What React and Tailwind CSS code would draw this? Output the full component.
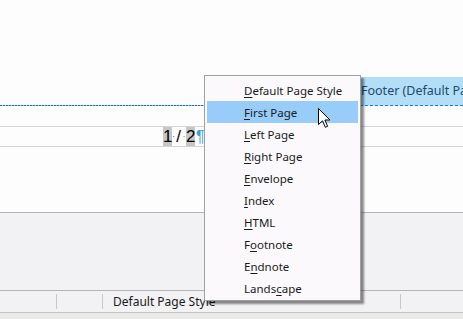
import React from "react";

const items = [
  ["", "D", "efault Page Style"],
  ["", "F", "irst Page"],
  ["", "L", "eft Page"],
  ["", "R", "ight Page"],
  ["", "E", "nvelope"],
  ["", "I", "ndex"],
  ["", "H", "TML"],
  ["F", "o", "otnote"],
  ["E", "n", "dnote"],
  ["Lands", "c", "ape"],
];

function Cursor() {
  return (
    <svg width="13" height="21" viewBox="0 0 13 21" className="absolute left-[318px] top-[108px]">
      <path
        d="M0.5 0.5 L0.5 16.5 L4.5 12.8 L7.3 19.3 L9.6 18.3 L6.9 12 L12 12 Z"
        fill="#fff"
        stroke="#000"
        strokeWidth="1"
        strokeLinejoin="miter"
      />
    </svg>
  );
}

export default function App() {
  return (
    <div
      className="relative w-[463px] h-[319px] overflow-hidden bg-[#fcfdfc] text-[12px] text-[#1a1a1a]"
      style={{ fontFamily: '"Noto Sans", "Open Sans", sans-serif' }}
    >
      <div className="flex flex-col h-full">
        {/* document area */}
        <div className="relative h-[212px] shrink-0 bg-[#fcfdfc]">
          <div className="h-[105px]" />
          <div className="h-px bg-[repeating-linear-gradient(90deg,#1c6fb8_0_2px,#9cc6e6_2px_3px)]" />
          <div className="h-[20px]" />
          <div className="h-[21px] border-y border-[#d6d6d6] flex items-center">
            <div
              className="ml-[163px] flex items-center text-[17px] leading-[19px] text-black"
              style={{ fontFamily: '"Liberation Sans", "Noto Sans", sans-serif' }}
            >
              <span className="bg-[#c6c6c6] w-[9px] text-center">1</span>
              <span className="text-[#2a6fb0] text-[9px] w-[3px] text-center">·</span>
              <span className="w-[7px] text-center">/</span>
              <span className="text-[#2a6fb0] text-[9px] w-[4px] text-center">·</span>
              <span className="bg-[#c6c6c6] w-[9px] text-center">2</span>
              <span className="text-[#3b9be0] text-[16px] ml-px">¶</span>
            </div>
          </div>
          {/* footer tag */}
          <div className="absolute left-[360px] top-[77px] w-[103px] h-[29px] overflow-hidden bg-[#b3def7] border-b border-dashed border-[#2b7cc2] flex items-center pl-[1px] text-[#1f4a6e] text-[12.5px] whitespace-nowrap">
            Footer (Default Page Style)
          </div>
        </div>
        {/* gray area */}
        <div className="h-[78px] shrink-0 bg-[#f2f1f4] border-t border-[#b4b3b6]" />
        {/* status bar */}
        <div className="h-[22px] shrink-0 bg-[#f2f1f4] border-t border-[#b4b3b6] flex items-center">
          <div className="w-[57px] h-[15px] border-r border-[#c8c8c8]" />
          <div className="w-[46px] h-[15px] border-r border-[#c8c8c8]" />
          <div className="w-[298px] h-[15px] border-r border-[#c8c8c8] pl-[10px] leading-[15px] text-[12px] text-[#1a1a1a]">
            Default Page Style
          </div>
        </div>
        <div className="flex-1 bg-[#eaebe9] border-t border-[#c4c4c4]" />
      </div>

      {/* popup menu */}
      <div className="absolute left-[204px] top-[75px] w-[157px] h-[226px] bg-[#fbf9fc] border border-[#a0a0a0] shadow-[3px_3px_2px_rgba(0,0,0,0.45)] pt-[3px] px-[2px] text-[11.5px]">
        {items.map(([pre, u, post], i) => (
          <div
            key={i}
            className={`h-[22px] flex items-center pl-[37px] pt-px whitespace-nowrap ${
              i === 1 ? "bg-[#99cdf9]" : ""
            }`}
          >
            <span>
              {pre}
              <span className="underline underline-offset-2 decoration-1">{u}</span>
              {post}
            </span>
          </div>
        ))}
      </div>
      <Cursor />
    </div>
  );
}
